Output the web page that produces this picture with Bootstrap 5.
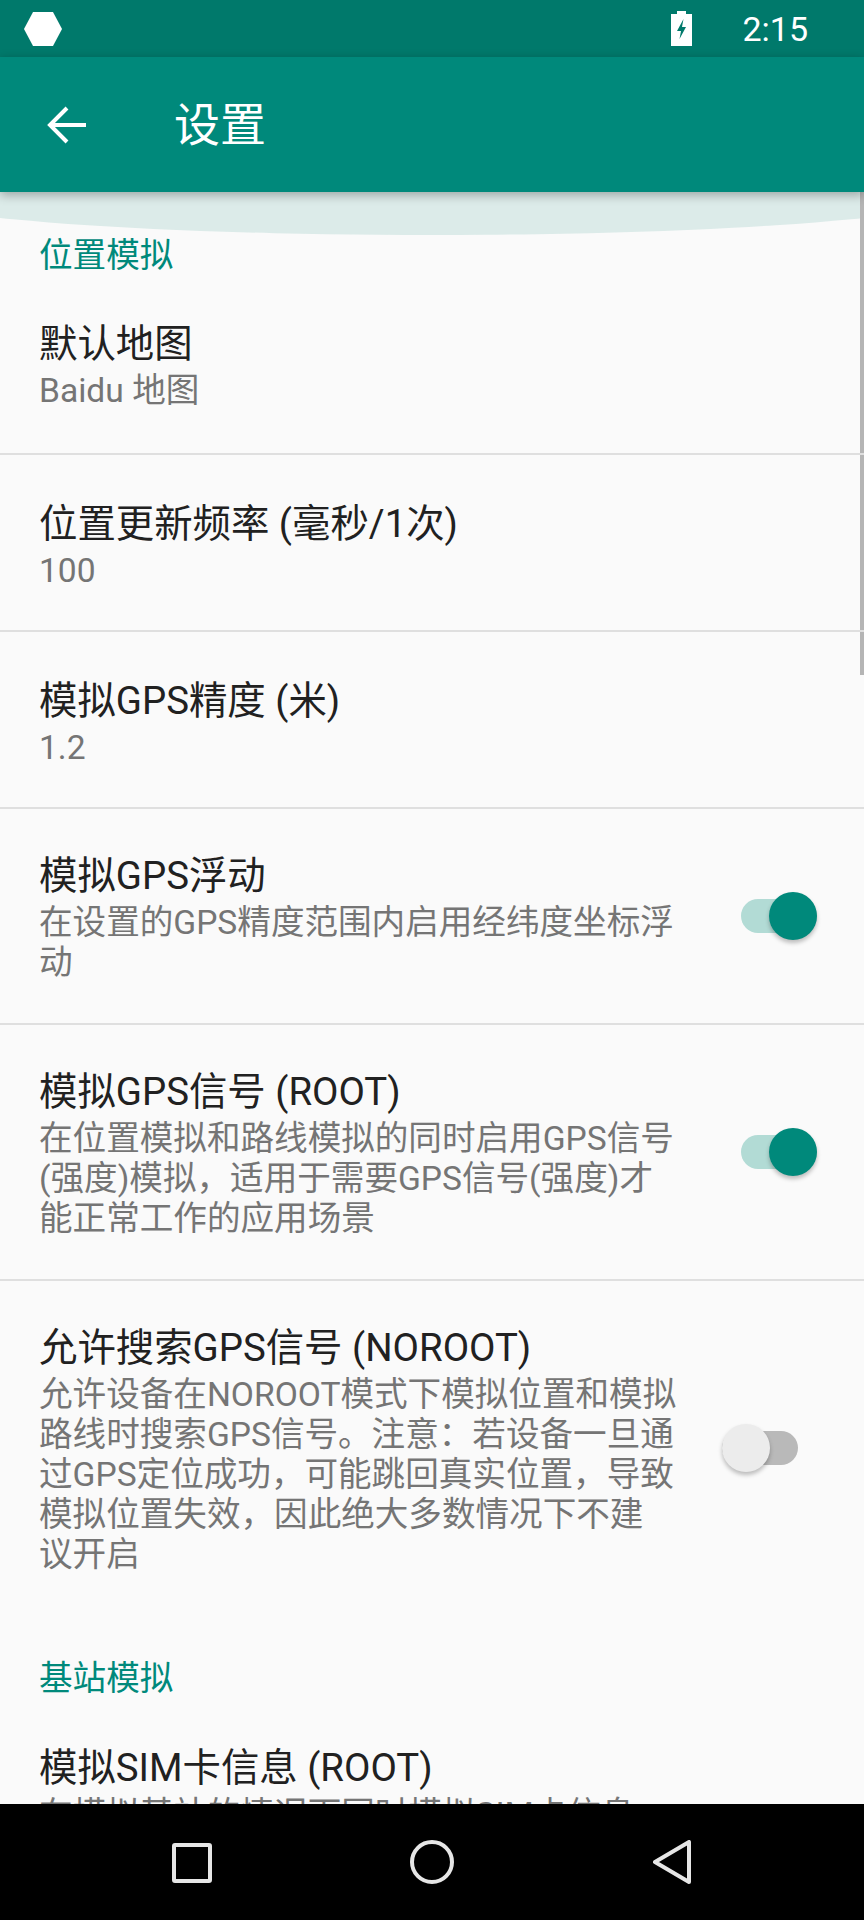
<!DOCTYPE html>
<html lang="zh-CN">
<head>
    <meta charset="UTF-8">
    <meta name="viewport" content="width=device-width, initial-scale=1.0">
    <title>设置</title>
    <link href="https://cdn.jsdelivr.net/npm/bootstrap@5.3.0/dist/css/bootstrap.min.css" rel="stylesheet">
    <style>
        html, body { height: 1920px; overflow: hidden; }
        body { font-family: Roboto, "Noto Sans CJK SC", sans-serif; background: #fafafa; }
        .screen { height: 1920px; }
        .status-bar { height: 57px; background: #00796b; color: #fff; padding: 0 56px 0 24px; font-size: 34px; }
        .status-time { margin-left: 50px; line-height: 1; }
        .app-bar { height: 135px; background: #00897b; color: #fff; padding-left: 47px; z-index: 2; box-shadow: 0 3px 10px rgba(0, 0, 0, .3); }
        .app-title { margin-left: 87px; font-size: 46px; line-height: 1; }
        .content { min-height: 0; background: #fafafa; }
        .glow { top: 0; left: -110px; right: -110px; height: 43px; background: #dcebe9; border-radius: 0 0 50% 50% / 0 0 100% 100%; }
        .scroll-thumb { top: 0; right: 0; width: 4px; height: 483px; background: #b5b5b5; }
        .section-title { padding: 44px 39px 0; font-size: 33.6px; line-height: 40px; color: #00897b; position: relative; }
        .pref-list { --bs-list-group-bg: transparent; --bs-list-group-border-color: #dfdfdf; --bs-list-group-border-width: 2px; }
        .pref-item { padding: 0 0 0 39px; }
        .pref-title { font-size: 38.4px; line-height: 54px; color: #212121; }
        .pref-summary { font-size: 33.6px; line-height: 40px; color: #757575; width: 640px; }
        .pad-first { padding-top: 41px; padding-bottom: 42px; }
        .pad-one { padding-top: 42px; padding-bottom: 39px; }
        .pad-multi { padding-top: 40px; padding-bottom: 40px; }
        .toggle-track { width: 76px; height: 34px; border-radius: 17px; background: #b2dbd5; }
        .toggle-knob { top: -7px; right: 0; width: 48px; height: 48px; border-radius: 50%; background: #00897b; box-shadow: 0 3px 4px rgba(0, 0, 0, .25); }
        .toggle-on { margin-right: 47px; }
        .toggle-off { margin-right: 66px; background: #b9b9b9; }
        .toggle-off .toggle-knob { right: auto; left: 0; background: #ececec; }
        .nav-bar { height: 116px; background: #000; z-index: 2; }
        .nav-bar svg { display: block; }
    </style>
</head>
<body>
    <div class="screen d-flex flex-column">
        <div class="status-bar d-flex align-items-center flex-shrink-0">
            <svg width="38" height="34" viewBox="0 0 38 34"><path d="M9 0h20l9 17-9 17H9L0 17z" fill="#fff"/></svg>
            <div class="ms-auto d-flex align-items-center">
                <svg width="21" height="35" viewBox="0 0 21 35"><path fill-rule="evenodd" d="M6 0h9v3h6v32H0V3h6zM12.500 8 6 20h4l-1.500 8L15 16h-4z" fill="#fff"/></svg>
                <span class="status-time">2:15</span>
            </div>
        </div>

        <div class="app-bar d-flex align-items-center flex-shrink-0 position-relative">
            <svg width="40" height="38" viewBox="0 0 40 38"><path d="M39 19H3M20 2 3 19l17 17" fill="none" stroke="#fff" stroke-width="4"/></svg>
            <span class="app-title">设置</span>
        </div>

        <div class="content flex-grow-1 position-relative overflow-hidden">
            <div class="glow position-absolute"></div>
            <div class="scroll-thumb position-absolute"></div>
            <div class="section-title">位置模拟</div>
            <div class="list-group list-group-flush pref-list">
                <div class="list-group-item pref-item pad-first">
                    <div class="pref-title">默认地图</div>
                    <div class="pref-summary">Baidu 地图</div>
                </div>
                <div class="list-group-item pref-item pad-one">
                    <div class="pref-title">位置更新频率 (毫秒/1次)</div>
                    <div class="pref-summary">100</div>
                </div>
                <div class="list-group-item pref-item pad-one">
                    <div class="pref-title">模拟GPS精度 (米)</div>
                    <div class="pref-summary">1.2</div>
                </div>
                <div class="list-group-item pref-item pad-multi d-flex align-items-center justify-content-between">
                    <div>
                        <div class="pref-title">模拟GPS浮动</div>
                        <div class="pref-summary">在设置的GPS精度范围内启用经纬度坐标浮动</div>
                    </div>
                    <div class="toggle-track toggle-on position-relative"><div class="toggle-knob position-absolute"></div></div>
                </div>
                <div class="list-group-item pref-item pad-multi d-flex align-items-center justify-content-between">
                    <div>
                        <div class="pref-title">模拟GPS信号 (ROOT)</div>
                        <div class="pref-summary">在位置模拟和路线模拟的同时启用GPS信号(强度)模拟，适用于需要GPS信号(强度)才能正常工作的应用场景</div>
                    </div>
                    <div class="toggle-track toggle-on position-relative"><div class="toggle-knob position-absolute"></div></div>
                </div>
                <div class="list-group-item pref-item pad-multi d-flex align-items-center justify-content-between">
                    <div>
                        <div class="pref-title">允许搜索GPS信号 (NOROOT)</div>
                        <div class="pref-summary">允许设备在NOROOT模式下模拟位置和模拟路线时搜索GPS信号。注意：若设备一旦通过GPS定位成功，可能跳回真实位置，导致模拟位置失效，因此绝大多数情况下不建<br>议开启</div>
                    </div>
                    <div class="toggle-track toggle-off position-relative"><div class="toggle-knob position-absolute"></div></div>
                </div>
            </div>
            <div class="section-title">基站模拟</div>
            <div class="list-group list-group-flush pref-list">
                <div class="list-group-item pref-item pad-one">
                    <div class="pref-title">模拟SIM卡信息 (ROOT)</div>
                    <div class="pref-summary">在模拟基站的情况下同时模拟SIM卡信息</div>
                </div>
            </div>
        </div>

        <div class="nav-bar flex-shrink-0 position-relative">
            <svg class="position-absolute" style="left: 172px; top: 39px" width="40" height="40" viewBox="0 0 40 40"><rect x="2" y="2" width="36" height="36" rx="1" fill="none" stroke="#e6e6e6" stroke-width="4"/></svg>
            <svg class="position-absolute" style="left: 410px; top: 36px" width="44" height="44" viewBox="0 0 44 44"><circle cx="22" cy="22" r="20" fill="none" stroke="#e6e6e6" stroke-width="4"/></svg>
            <svg class="position-absolute" style="left: 653px; top: 36px" width="38" height="44" viewBox="0 0 38 44"><path d="M36 2v40L2 22z" fill="none" stroke="#e6e6e6" stroke-width="4" stroke-linejoin="round"/></svg>
        </div>
    </div>

    <script src="https://cdn.jsdelivr.net/npm/bootstrap@5.3.0/dist/js/bootstrap.bundle.min.js"></script>
</body>
</html>
